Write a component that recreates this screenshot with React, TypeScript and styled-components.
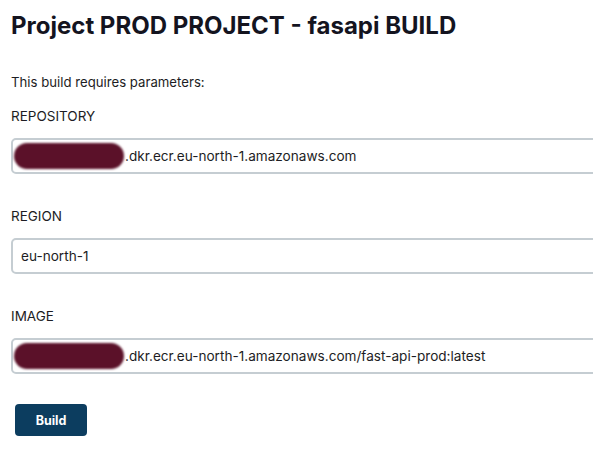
import React from "react";
import styled, { createGlobalStyle } from "styled-components";

const Global = createGlobalStyle`
  html, body { margin: 0; padding: 0; background: #fff; overflow: hidden; }
  body { font-family: Inter, "Noto Sans", "Liberation Sans", sans-serif; color: #1d1d24; }
`;

const Page = styled.div`
  padding: 10px 0 0 11px;
  width: 640px;
`;

const Title = styled.h1`
  margin: 0;
  font-size: 24px;
  line-height: 32px;
  font-weight: 700;
  color: #14141f;
`;

const Intro = styled.p`
  margin: 31px 0 0 0;
  font-size: 13.2px;
  line-height: 18px;
  color: #1d1d24;
`;

const Param = styled.div<{ $first?: boolean }>`
  display: flex;
  flex-direction: column;
  margin-top: ${(p) => (p.$first ? "16px" : "33px")};
`;

const Label = styled.div`
  font-size: 13.5px;
  line-height: 18px;
  color: #1d1d24;
  margin-bottom: 13px;
`;

const Field = styled.div`
  box-sizing: border-box;
  height: 36px;
  width: 620px;
  border: 2px solid #c5cdd2;
  border-radius: 5px;
  display: flex;
  align-items: center;
  padding: 0 8px;
  font-size: 13.6px;
  color: #1d1d24;
  background: #fff;
`;

const Redacted = styled.span`
  display: inline-block;
  width: 110px;
  height: 26px;
  margin-left: -7px;
  margin-right: 1px;
  border-radius: 13px;
  background: #5b1129;
  filter: blur(1px);
  flex: none;
`;

const Actions = styled.div`
  margin-top: 30px;
  padding-left: 4px;
`;

const Button = styled.button`
  width: 72px;
  height: 32px;
  border: none;
  border-radius: 4px;
  background: #0c3d5f;
  color: #fff;
  font-family: inherit;
  font-size: 12.5px;
  font-weight: 700;
  cursor: pointer;
`;

export default function App() {
  return (
    <>
      <Global />
      <Page>
        <Title>Project PROD PROJECT - fasapi BUILD</Title>
        <Intro>This build requires parameters:</Intro>
        <Param $first>
          <Label>REPOSITORY</Label>
          <Field>
            <Redacted />
            <span>.dkr.ecr.eu-north-1.amazonaws.com</span>
          </Field>
        </Param>
        <Param>
          <Label>REGION</Label>
          <Field>eu-north-1</Field>
        </Param>
        <Param>
          <Label>IMAGE</Label>
          <Field>
            <Redacted />
            <span>.dkr.ecr.eu-north-1.amazonaws.com/fast-api-prod:latest</span>
          </Field>
        </Param>
        <Actions>
          <Button>Build</Button>
        </Actions>
      </Page>
    </>
  );
}
